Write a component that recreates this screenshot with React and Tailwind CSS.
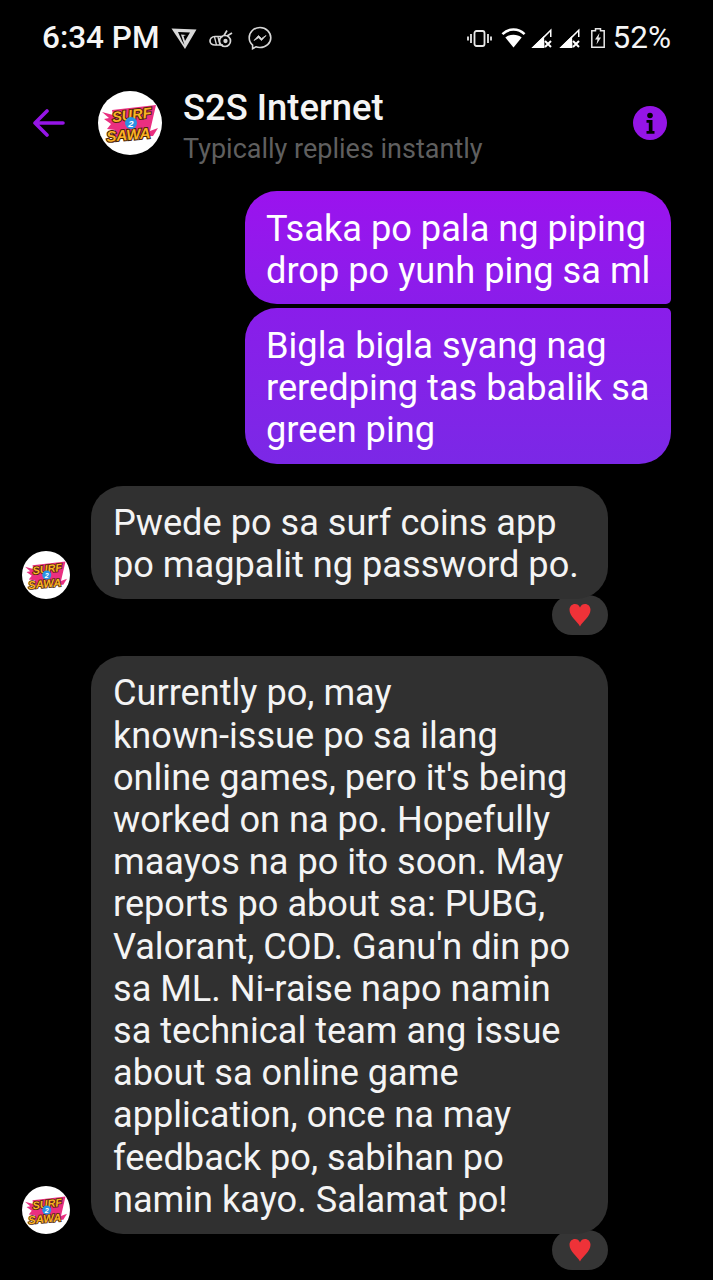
const font = { fontFamily: "Roboto, sans-serif" };

function Logo({ className }) {
  return (
    <svg viewBox="0 0 64 64" className={`overflow-visible ${className}`}>
      <circle cx="32" cy="32" r="32" fill="#fff" />
      <path d="M4 21 L15 24 L14 19 L58 14 L52 40 L60 37 L55 45 L15 46 L17 39 L9 38 L13 33 L6 28 L11 27 Z" fill="#ea2f80" />
      <g fontFamily="Liberation Sans, sans-serif" fontWeight="700" fontStyle="italic" stroke="#4a2408" strokeWidth="2" style={{ paintOrder: "stroke" }} fill="#fbb225">
        <text x="14" y="29" fontSize="14.500" transform="rotate(-7 33 24)">SURF</text>
        <text x="8" y="49" fontSize="15" transform="rotate(-5 30 42)">SAWA</text>
      </g>
      <circle cx="33" cy="32" r="6" fill="#2a92e4" />
      <text x="33" y="35.500" fontSize="9.500" fontWeight="700" fontStyle="italic" fill="#fff" textAnchor="middle" fontFamily="Liberation Sans, sans-serif">2</text>
    </svg>
  );
}

function StatusLeft() {
  return (
    <div className="flex items-center">
      <span className="text-[31.5px] font-medium leading-none text-[#f5f5f5]">6:34 PM</span>
      <svg viewBox="0 0 26 21" className="ml-[11px] w-[26px] h-[21px]">
        <path d="M0.500 0.500 L25.500 1.500 L14 21 Z" fill="#d8d8d8" />
        <path d="M7 4 L19 4.500 L14 13 L12.500 8 L15 7 L10 6.500 L13.500 17 L11 13 Z" fill="#000" />
      </svg>
      <svg viewBox="0 0 24 19" className="ml-[12px] w-[24px] h-[19px]" fill="none" stroke="#d8d8d8" strokeWidth="1.700">
        <path d="M14 7.500 H6 C2.500 7.500 1 10 1 12 C1 14 3 16 6 16 H14" />
        <path d="M9 8 L11 16 M5.500 8 L7.500 16" strokeWidth="1.300" />
        <circle cx="16" cy="12" r="5.500" />
        <circle cx="16.500" cy="12" r="1.300" fill="#d8d8d8" />
        <path d="M15 6.500 L18 1.500 M18 7 L23 4" />
      </svg>
      <svg viewBox="0 0 24 24" className="ml-[15px] w-[24px] h-[24px]" fill="none" stroke="#d8d8d8" strokeWidth="1.600">
        <path d="M12 1.500C6 1.500 1.200 6 1.200 11.700c0 3 1.300 5.600 3.400 7.400v3.600l3.300-1.900c1.300.5 2.700.7 4.100.7 6 0 10.800-4.400 10.800-9.800S18 1.500 12 1.500Z" />
        <path d="M6 14.500 L10.500 9.500 L13.500 12.500 L18 9.500 L13.500 14.500 L10.500 11.800 Z" fill="#d8d8d8" strokeWidth="0.800" />
      </svg>
    </div>
  );
}

function StatusRight() {
  return (
    <div className="flex items-center">
      <svg viewBox="0 0 25 17" className="w-[25px] h-[17px] mr-[9px]" fill="none" stroke="#e8e8e8" strokeWidth="1.800">
        <rect x="7.500" y="1" width="10" height="15" rx="2" />
        <path d="M4 4v9M1 6.500v4M21 4v9M24 6.500v4" />
      </svg>
      <svg viewBox="0 0 26 20" className="w-[25px] h-[20px] mr-[5px]">
        <path d="M13 20 L4.500 9.500 C9 5.500 17 5.500 21.500 9.500 Z" fill="#fff" />
        <path d="M1.500 6 C8 -0.500 18 -0.500 24.500 6" stroke="#fff" strokeWidth="2.600" fill="none" />
      </svg>
      {[0, 1].map((i) => (
        <svg key={i} viewBox="0 0 22 20" className="w-[22px] h-[20px] mr-[6px]">
          <path d="M0.500 20 L20.500 0.500 V9 H19 V4 L13 10 V20 Z" fill="#fff" />
          <path d="M13.500 20 H0.500 L13 8 Z" fill="#fff" />
          <path d="M14 13 L20 19 M20 13 L14 19" stroke="#fff" strokeWidth="2" />
        </svg>
      ))}
      <svg viewBox="0 0 14 20" className="w-[14px] h-[20px] ml-[4px] mr-[8px]" fill="none" stroke="#e8e8e8" strokeWidth="1.500">
        <path d="M4.500 0.800h5v2h3.700v16.400h-12.400v-16.400h3.700z" />
        <path d="M8.500 5 L4 11.500 H6.500 L5.500 16.500 L10 9.500 H7.500 Z" fill="#e8e8e8" stroke="none" />
      </svg>
      <span className="text-[31.5px] leading-none text-[#f5f5f5]">52%</span>
    </div>
  );
}

function Header() {
  return (
    <div className="flex items-center h-[94px] pl-[33px] pr-[46px]">
      <svg viewBox="0 0 32 28" className="w-[32px] h-[28px] shrink-0" fill="none" stroke="#9515e6" strokeWidth="3.600" strokeLinecap="round" strokeLinejoin="round">
        <path d="M30 14H2M14 2 2 14l12 12" />
      </svg>
      <Logo className="ml-[33px] w-[64px] h-[64px] shrink-0" />
      <div className="ml-[21px] flex-1 pt-[10px]">
        <div className="text-[36.4px] font-medium leading-[42px] text-[#f4f4f4]">S2S Internet</div>
        <div className="text-[27px] leading-[40px] text-[#5f5f5f]">Typically replies instantly</div>
      </div>
      <svg viewBox="0 0 34 34" className="w-[34px] h-[34px] shrink-0">
        <circle cx="17" cy="17" r="17" fill="#9515e6" />
        <circle cx="17" cy="9.500" r="2.800" fill="#000" />
        <path d="M13.500 14h6v11h2v2.800h-8V25h2.300v-8.200h-2.300Z" fill="#000" />
      </svg>
    </div>
  );
}

function Reaction() {
  return (
    <div className="ml-auto mr-[105px] -mt-[4px] flex h-[40px] w-[56px] items-center justify-center rounded-full bg-[#353535] ring-2 ring-black">
      <svg viewBox="0 0 22 24" className="w-[22px] h-[24px]">
        <path d="M11 23.500C8.500 18.500 0.500 13.500 0.500 6.800 0.500 3.300 3 1 6 1c2.200 0 4 1.200 5 3.400C12 2.200 13.800 1 16 1c3 0 5.500 2.300 5.500 5.800C21.500 13.500 13.500 18.500 11 23.500Z" fill="#ef3238" />
      </svg>
    </div>
  );
}

function TheirMessage({ lines, className }) {
  return (
    <div className={`flex items-end ${className}`}>
      <Logo className="ml-[22px] w-[48px] h-[48px] shrink-0" />
      <div className="ml-[21px] w-[517px] rounded-[32px] bg-[#303030] pl-[22px] pt-[16px] pb-[13px] text-[36.15px] leading-[42.2px] text-[#f4f4f4] whitespace-pre">
        {lines}
      </div>
    </div>
  );
}

export default function App() {
  return (
    <div className="h-[1280px] w-[713px] overflow-hidden bg-black" style={font}>
      <div className="flex h-[76px] items-center justify-between px-[42px]">
        <StatusLeft />
        <StatusRight />
      </div>
      <Header />
      <div className="pt-[21px]">
        <div className="ml-auto mr-[42px] w-[426px] flex flex-col gap-[4px] text-[36.2px] leading-[42px] text-white whitespace-pre">
          <div className="h-[113px] rounded-[32px] rounded-br-[5px] bg-gradient-to-b from-[#9b12ee] to-[#8a1dea] pl-[21px] pt-[17px]">
            {"Tsaka po pala ng piping\ndrop po yunh ping sa ml"}
          </div>
          <div className="h-[156px] rounded-[32px] rounded-tr-[5px] bg-gradient-to-b from-[#8a1dea] to-[#7b28e6] pl-[21px] pt-[17px]">
            {"Bigla bigla syang nag\nreredping tas babalik sa\ngreen ping"}
          </div>
        </div>
        <TheirMessage className="mt-[22px]" lines={"Pwede po sa surf coins app\npo magpalit ng password po."} />
        <Reaction />
        <TheirMessage
          className="mt-[21px]"
          lines={"Currently po, may\nknown-issue po sa ilang\nonline games, pero it's being\nworked on na po. Hopefully\nmaayos na po ito soon. May\nreports po about sa: PUBG,\nValorant, COD. Ganu'n din po\nsa ML. Ni-raise napo namin\nsa technical team ang issue\nabout sa online game\napplication, once na may\nfeedback po, sabihan po\nnamin kayo. Salamat po!"}
        />
        <Reaction />
      </div>
    </div>
  );
}
